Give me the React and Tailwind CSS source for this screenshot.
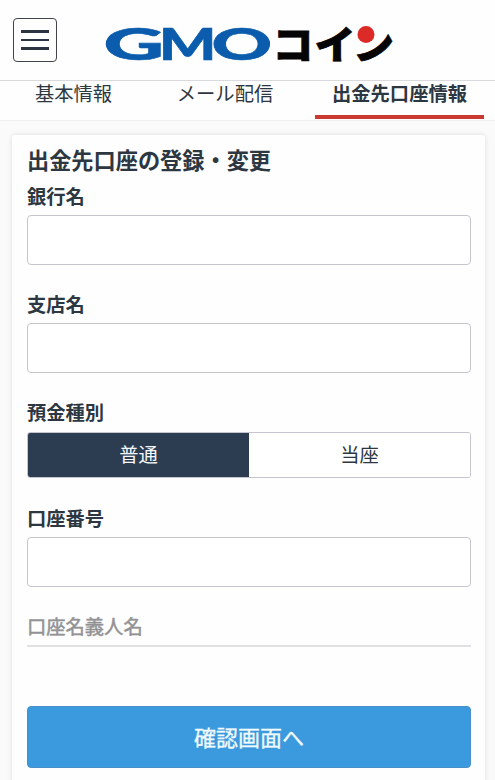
import React, { useState } from 'react';

const TABS = [
    { label: '基本情報', className: 'w-[117px] ml-[15px]' },
    { label: 'メール配信', className: 'w-[183px] pl-[3px]' },
    { label: '出金先口座情報', className: 'w-[169px] font-bold border-b-4 border-[#cb3a30]' },
];

// each letter is stretched on its own, the wordmark is much wider than the font
const Logo = () => (
    <svg width="310" height="80" viewBox="0 0 310 80" role="img" aria-label="GMOコイン">
        <g
            fontFamily="Lato, sans-serif"
            fontWeight="900"
            fontSize="44"
            fill="#0b5cad"
            stroke="#0b5cad"
            strokeWidth="0.6"
        >
            <text transform="translate(3.5 60) scale(1.9 1)">G</text>
            <text transform="translate(59 60) scale(1.37 1)">M</text>
            <text transform="translate(111.5 60) scale(1.7 1)">O</text>
        </g>
        <g
            fontFamily="'Noto Sans CJK JP', sans-serif"
            fontWeight="900"
            fontSize="41"
            fill="#050505"
            stroke="#050505"
            strokeWidth="0.8"
        >
            <text transform="translate(172.5 58.5) scale(1 0.95)">コ</text>
            <text transform="translate(214.5 58.5) scale(1 0.95)">イ</text>
            <text transform="translate(253 58.5) scale(1 0.95)">ン</text>
        </g>
        <circle cx="265" cy="35" r="11" fill="#fefefe" />
        <circle cx="266" cy="34.5" r="8.5" fill="#dc2b27" />
    </svg>
);

const Header = () => (
    <header className="h-[81px] shrink-0 flex items-start border-b border-[#d9dade] bg-[#fefefe] pl-[13px]">
        <button
            type="button"
            aria-label="メニュー"
            className="mt-[18px] w-[44px] h-[44px] shrink-0 rounded-[4px] border border-[#40444d] flex flex-col items-center justify-center gap-[6px]"
        >
            <span className="w-[28px] h-[2.5px] bg-[#2f3540]" />
            <span className="w-[28px] h-[2.5px] bg-[#2f3540]" />
            <span className="w-[28px] h-[2.5px] bg-[#2f3540]" />
        </button>
        <div className="ml-[43px]">
            <Logo />
        </div>
    </header>
);

const TextField = ({ label }) => (
    <label className="block">
        <span className="block h-[36px] leading-[35px] text-[19.3px] font-bold">{label}</span>
        <input
            type="text"
            className="block w-full h-[50px] rounded-[4px] border border-[#c6c4cf] bg-white px-3 outline-none"
        />
    </label>
);

const App = () => {
    const [accountType, setAccountType] = useState('普通');

    return (
        <div className="h-[780px] overflow-hidden flex flex-col bg-[#fafafb] text-[#2d3741] font-['Noto_Sans_CJK_JP',sans-serif]">
            <Header />

            {/* Tabs */}
            <nav className="h-[40px] shrink-0 flex items-start bg-[#fefefe] border-b border-[#f0f0f3]">
                {TABS.map((tab) => (
                    <button
                        key={tab.label}
                        type="button"
                        className={`h-[38px] pb-[10px] shrink-0 whitespace-nowrap text-[19.3px] leading-[24px] flex items-start justify-center ${tab.className}`}
                    >
                        {tab.label}
                    </button>
                ))}
            </nav>

            {/* Bank account form */}
            <main className="flex-1 pt-[14px] pl-[12px] pr-[10px]">
                <form className="h-[660px] bg-[#fefefe] rounded-[3px] shadow-[0_0_5px_rgba(0,0,0,0.12)] pl-[15px] pr-[14px] pt-[8px]">
                    <h1 className="h-[36px] leading-[32px] text-[22.2px] font-bold">出金先口座の登録・変更</h1>
                    <TextField label="銀行名" />
                    <div className="mt-[22px]">
                        <TextField label="支店名" />
                    </div>

                    <div className="mt-[22px]">
                        <div className="h-[37px] leading-[35px] text-[19.3px] font-bold">預金種別</div>
                        <div className="flex h-[46px] rounded-[3px] border border-[#c6c4cf] overflow-hidden">
                            {['普通', '当座'].map((type) => (
                                <button
                                    key={type}
                                    type="button"
                                    onClick={() => setAccountType(type)}
                                    className={`flex-1 text-[19.3px] leading-none ${accountType === type ? 'bg-[#2c3d51] text-[#f4f8fb]' : 'bg-white'}`}
                                >
                                    {type}
                                </button>
                            ))}
                        </div>
                    </div>

                    <div className="mt-[23px]">
                        <TextField label="口座番号" />
                    </div>

                    <div className="mt-[22px] h-[38px] leading-[35px] text-[19.3px] [-webkit-text-stroke:0.5px] text-[#929295] border-b-2 border-[#e1e1e5]">
                        口座名義人名
                    </div>

                    <button
                        type="submit"
                        className="mt-[59px] w-full h-[62px] pb-[3px] rounded-[4px] border border-[#4a90c8] bg-[#3a9add] text-[22px] leading-none text-[#f1fafd] [-webkit-text-stroke:0.3px]"
                    >
                        確認画面へ
                    </button>
                </form>
            </main>
        </div>
    );
};

export default App;
